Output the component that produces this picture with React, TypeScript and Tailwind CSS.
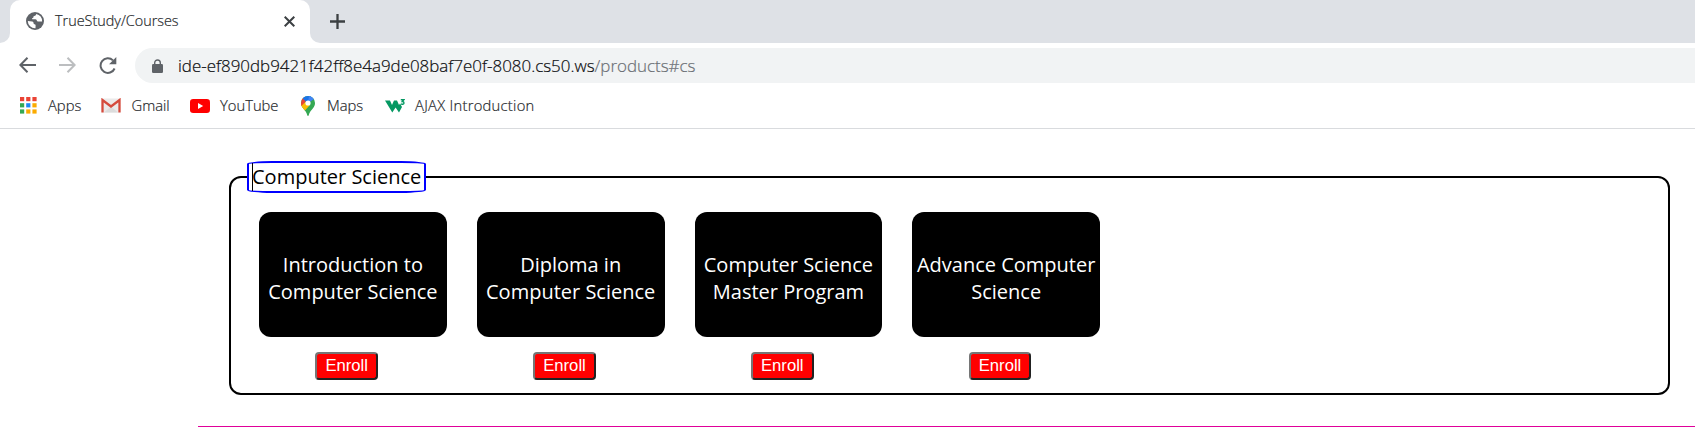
import type { ReactNode } from "react";

const courses = [
  ["Introduction to", "Computer Science"],
  ["Diploma in", "Computer Science"],
  ["Computer Science", "Master Program"],
  ["Advance Computer", "Science"],
];

function GlobeIcon() {
  return (
    <svg className="h-[18px] w-[18px]" viewBox="0 0 18 18">
      <circle cx="9" cy="9" r="9" fill="#5f6368" />
      <path
        d="M10.2 1.900c-.2 1.200-.9 1.800-2 2-.6.1-.9.6-.8 1.200.1.7-.4 1-1.100 1.100-.5.1-.4.8.1 1h3c1 .1 1.400.8 1.500 1.600.1.6.7.9 1.300.8h3.900A7.200 7.200 0 0 0 10.200 1.900zM1.800 9c1.300.3 3 .2 4.400.4 1 .2 1.500.9 1.400 1.800 0 .7.5 1 1.100 1.100.8.100 1 .7.900 1.400l-.1 2.500A7.200 7.200 0 0 1 1.800 9z"
        fill="#fff"
      />
    </svg>
  );
}

function AppsIcon() {
  const colors = ["#ea4335", "#ea4335", "#ea4335", "#34a853", "#1e88f5", "#fbab00", "#34a853", "#fbab00", "#fbab00"];
  return (
    <svg className="h-[17px] w-[17px]" viewBox="0 0 17 17">
      {colors.map((c, i) => (
        <rect key={i} x={(i % 3) * 6.2} y={Math.floor(i / 3) * 6.2} width="4.200" height="4.200" fill={c} />
      ))}
    </svg>
  );
}

function GmailIcon() {
  return (
    <svg className="h-[15px] w-[20px]" viewBox="0 0 20 15">
      <rect x="1" y="0.500" width="18" height="14" rx="1" fill="#eceaea" />
      <path d="M3 14.500l7-6 7 6z" fill="#dcdcdc" />
      <path d="M1.500 14.500V2l8.500 6.500L18.500 2v12.500" fill="none" stroke="#d54b3d" strokeWidth="2.300" />
    </svg>
  );
}

function YouTubeIcon() {
  return (
    <svg className="h-[14px] w-[20px]" viewBox="0 0 20 14">
      <rect width="20" height="14" rx="3.200" fill="#f00" />
      <path d="M8 4l5.200 3L8 10z" fill="#fff" />
    </svg>
  );
}

function MapsIcon() {
  return (
    <svg className="h-[20px] w-[14px]" viewBox="0 0 14 20">
      <defs>
        <clipPath id="pin">
          <path d="M7 0a7 7 0 0 0-7 7c0 2 .7 3.500 2 5.200C4 14.600 5.700 16.500 6.200 19c.2 1.200 1.400 1.200 1.600 0 .5-2.500 2.200-4.400 4.200-6.800 1.300-1.700 2-3.200 2-5.200a7 7 0 0 0-7-7z" />
        </clipPath>
      </defs>
      <g clipPath="url(#pin)">
        <rect width="14" height="20" fill="#34a853" />
        <path d="M0 8l5-2 4 3-6 6.500H0z" fill="#fbbc04" />
        <path d="M0 10.500L7 3 1.600 1 0 3z" fill="#ea4335" />
        <path d="M1.600 2.400L6 6.500 12.800 3.200 11 0H3z" fill="#1a73e8" />
        <path d="M7 7l6-4L10 0H8z" fill="#4285f4" />
      </g>
      <circle cx="7" cy="7" r="2.600" fill="#fff" />
    </svg>
  );
}

function W3Icon() {
  return (
    <svg className="h-[14px] w-[20px]" viewBox="0 0 20 14" fill="none" stroke="#059862">
      <path d="M0 1.500h5l2 4.500 2-4.500h3l2 4.500 1-1.500L17 8l-3 5.500L10.600 8.500l-3.300 5z" fill="#059862" stroke="none" />
      <path d="M15.800 .8h3l-1.500 1.700c1 0 1.700.4 1.700 1.400 0 1.500-2.200 1.800-3.200.8" strokeWidth="1.400" />
    </svg>
  );
}

function Bookmark({ icon, label, box }: { icon: ReactNode; label: string; box: string }) {
  return (
    <div className={`flex items-center ${box}`}>
      <span className="flex h-5 items-center">{icon}</span>
      <span className="-mt-px text-[14.750px] leading-5 font-light whitespace-nowrap text-[#26292c] [-webkit-text-stroke:0.2px]">{label}</span>
    </div>
  );
}

export default function App() {
  return (
    <div className="h-[440px] w-[1695px] overflow-hidden bg-white font-['Open_Sans',sans-serif]">
      <header className="flex h-[129px] flex-col border-b border-[#d9dbde]">
        <div className="flex h-[43px] bg-[#dee1e6]">
          <div className="w-[10px] bg-white">
            <div className="h-full rounded-br-[10px] bg-[#dee1e6]" />
          </div>
          <div className="w-[300px] bg-[#dee1e6]">
            <div className="flex h-full items-center rounded-t-[10px] bg-white pr-[15px] pb-px pl-4">
              <GlobeIcon />
              <span className="ml-[11px] text-[14.400px] leading-5 font-light whitespace-nowrap text-[#26292c] [-webkit-text-stroke:0.2px]">
                TrueStudy/Courses
              </span>
              <svg className="ml-auto h-[11px] w-[11px]" viewBox="0 0 11 11" stroke="#3c4043" strokeWidth="2">
                <path d="M0.700 0.700l9.600 9.600M10.300 0.700l-9.600 9.600" />
              </svg>
            </div>
          </div>
          <div className="flex-1 bg-white">
            <div className="flex h-full items-center rounded-bl-[10px] bg-[#dee1e6] pb-px pl-5">
              <svg className="h-[15px] w-[15px]" viewBox="0 0 15 15" stroke="#3c4043" strokeWidth="2.300">
                <path d="M7.500 0v15M0 7.500h15" />
              </svg>
            </div>
          </div>
        </div>
        <div className="flex h-[44px] items-center">
          <svg className="ml-[19px] h-4 w-[17px]" viewBox="0 0 17 16" fill="none" stroke="#5f6368" strokeWidth="2">
            <path d="M17 8H1.500M8.500 .8L1.400 8l7.100 7.200" />
          </svg>
          <svg className="ml-[23px] h-4 w-[17px]" viewBox="0 0 17 16" fill="none" stroke="#bcbec0" strokeWidth="2">
            <path d="M0 8h15.500M8.500 .8L15.600 8l-7.100 7.200" />
          </svg>
          <svg className="ml-[23px] h-[17px] w-[18px]" viewBox="0 0 18 17" fill="none" stroke="#5f6368" strokeWidth="2">
            <path d="M15.600 11.500A7.300 7.300 0 1 1 14 3.400" />
            <path d="M17.300 0v7.200h-7.200z" fill="#5f6368" stroke="none" />
          </svg>
          <div className="ml-[18px] flex h-[35px] flex-1 items-center rounded-l-full bg-[#f1f3f4] pl-[17px]">
            <svg className="mt-px h-[14px] w-[11px]" viewBox="0 0 11 14">
              <path d="M2.700 6V3.800a2.800 2.800 0 0 1 5.600 0V6" fill="none" stroke="#5f6368" strokeWidth="1.400" />
              <rect y="5" width="11" height="9" rx="1.200" fill="#5f6368" />
            </svg>
            <span className="mt-px ml-[15px] text-[16.930px] leading-6 font-light whitespace-nowrap text-[#0c0d0f] [-webkit-text-stroke:0.2px]">
              ide-ef890db9421f42ff8e4a9de08baf7e0f-8080.cs50.ws<span className="text-[#6b6f74]">/products#cs</span>
            </span>
          </div>
        </div>
        <div className="flex flex-1 items-center pb-1 pl-[20px]">
          <Bookmark icon={<AppsIcon />} label="Apps" box="w-[81px] gap-[11px]" />
          <Bookmark icon={<GmailIcon />} label="Gmail" box="w-[89px] gap-[10.500px]" />
          <Bookmark icon={<YouTubeIcon />} label="YouTube" box="w-[111px] gap-[10px]" />
          <Bookmark icon={<MapsIcon />} label="Maps" box="w-[84px] gap-[12px]" />
          <Bookmark icon={<W3Icon />} label="AJAX Introduction" box="gap-[10px] tracking-[0.270px]" />
        </div>
      </header>

      <main className="pt-8 pl-[198px]">
        <fieldset className="ml-[31px] h-[234px] w-[1441px] rounded-[12px] border-2 border-black pl-7">
          <legend className="ml-[-12px] h-8 w-[179px] rounded-[25px/3px] border-2 border-[#0000ff] text-[20px] leading-[28px] text-black">
            <span className="ml-[3px] inline-block h-[28px] border-l border-black">
              <span className="-ml-px">Computer Science</span>
            </span>
          </legend>
          <div className="flex gap-[30px] pt-[19px]">
            {courses.map(([first, second]) => (
              <article key={first} className="flex w-[187.780px] flex-col items-center">
                <div className="flex h-[125px] w-full flex-col items-center justify-center rounded-[12px] bg-black pt-[6px] text-[20px] leading-[27px] whitespace-nowrap text-white">
                  <span>{first}</span>
                  <span>{second}</span>
                </div>
                <button className="mt-[15px] mr-[12.300px] h-[28px] w-[62.700px] rounded-[4px] border-2 border-t-[#767676] border-r-[#212121] border-b-[#212121] border-l-[#767676] bg-[#ff0000] pb-px font-['Liberation_Sans',Arial,sans-serif] text-[16.670px] leading-[23px] text-white">
                  Enroll
                </button>
              </article>
            ))}
          </div>
        </fieldset>
        <div className="mt-[31px] h-px bg-[#e0009a]" />
      </main>
    </div>
  );
}
